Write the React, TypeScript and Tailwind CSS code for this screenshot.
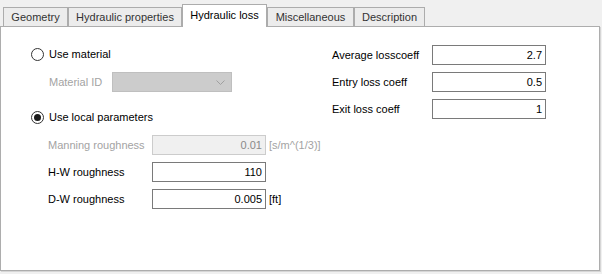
import React from "react";

const tabs = ["Geometry", "Hydraulic properties", "Hydraulic loss", "Miscellaneous", "Description"];
const tabWidths = ["w-[65px]", "w-[114px]", "w-[85px]", "w-[87px]", "w-[71px]"];

function Radio({ checked, label }: { checked?: boolean; label: string }) {
  return (
    <div className="flex h-[20px] items-center">
      <span className="flex h-[13px] w-[13px] items-center justify-center rounded-full border border-[#333333] bg-white">
        {checked && <span className="h-[7px] w-[7px] rounded-full bg-[#1a1a1a]" />}
      </span>
      <span className="ml-[5px] text-black">{label}</span>
    </div>
  );
}

function Field({
  label,
  value,
  unit,
  disabled,
  labelWidth,
}: {
  label: string;
  value: string;
  unit?: string;
  disabled?: boolean;
  labelWidth: string;
}) {
  return (
    <div className="flex h-[20px] items-center">
      <span className={`${labelWidth} ${disabled ? "text-[#a3a3a3]" : "text-black"}`}>{label}</span>
      <div
        className={`flex h-[20px] w-[114px] items-center justify-end border pr-[3px] ${
          disabled ? "border-[#cccccc] bg-[#f0f0f0] text-[#8a8a8a]" : "border-[#7a7a7a] bg-white text-black"
        }`}
      >
        {value}
      </div>
      {unit && <span className={`ml-[3px] ${disabled ? "text-[#a3a3a3]" : "text-black"}`}>{unit}</span>}
    </div>
  );
}

export default function App() {
  return (
    <div
      className="flex h-[274px] w-[602px] flex-col bg-[#f0f0f0] text-[11px] leading-none"
      style={{ fontFamily: '"Liberation Sans", Arial, sans-serif' }}
    >
      {/* Onglets */}
      <div className="relative z-10 flex h-[26px] items-end pl-[3px]">
        {tabs.map((t, i) => {
          const active = t === "Hydraulic loss";
          return (
            <div
              key={t}
              className={`flex items-center justify-center border border-b-0 ${tabWidths[i]} ${
                active
                  ? "-mb-px h-[23px] border-[#acacac] bg-white pb-[2px] text-black"
                  : "h-[19px] border-[#acacac] bg-[#ececec] text-[#333333]"
              }`}
            >
              {t}
            </div>
          );
        })}
      </div>

      {/* Panneau */}
      <div className="mr-[2px] mb-[3px] flex flex-1 items-start border border-[#adadad] bg-white shadow-[1px_1px_0_#d6d6d6]">
        <div className="flex w-[331px] flex-col pl-[30px] pt-[17px]">
          <Radio label="Use material" />
          <div className="mt-[8px] flex h-[20px] items-center pl-[18px]">
            <span className="w-[63px] text-[#a3a3a3]">Material ID</span>
            <div className="flex h-[20px] w-[120px] items-center justify-end border border-[#bfbfbf] bg-[#cccccc] pr-[6px]">
              <svg width="9" height="5" viewBox="0 0 9 5" fill="none">
                <path d="M0.5 0.5 L4.5 4.5 L8.5 0.5" stroke="#a0a0a0" strokeWidth="1" />
              </svg>
            </div>
          </div>
          <div className="mt-[15px]">
            <Radio checked label="Use local parameters" />
          </div>
          <div className="mt-[8px] flex flex-col gap-[7px] pl-[17px]">
            <Field label="Manning roughness" value="0.01" unit="[s/m^(1/3)]" disabled labelWidth="w-[104px]" />
            <Field label="H-W roughness" value="110" labelWidth="w-[104px]" />
            <Field label="D-W roughness" value="0.005" unit="[ft]" labelWidth="w-[104px]" />
          </div>
        </div>

        <div className="flex flex-col gap-[7px] pt-[18px]">
          <Field label="Average losscoeff" value="2.7" labelWidth="w-[100px]" />
          <Field label="Entry loss coeff" value="0.5" labelWidth="w-[100px]" />
          <Field label="Exit loss coeff" value="1" labelWidth="w-[100px]" />
        </div>
      </div>
    </div>
  );
}
